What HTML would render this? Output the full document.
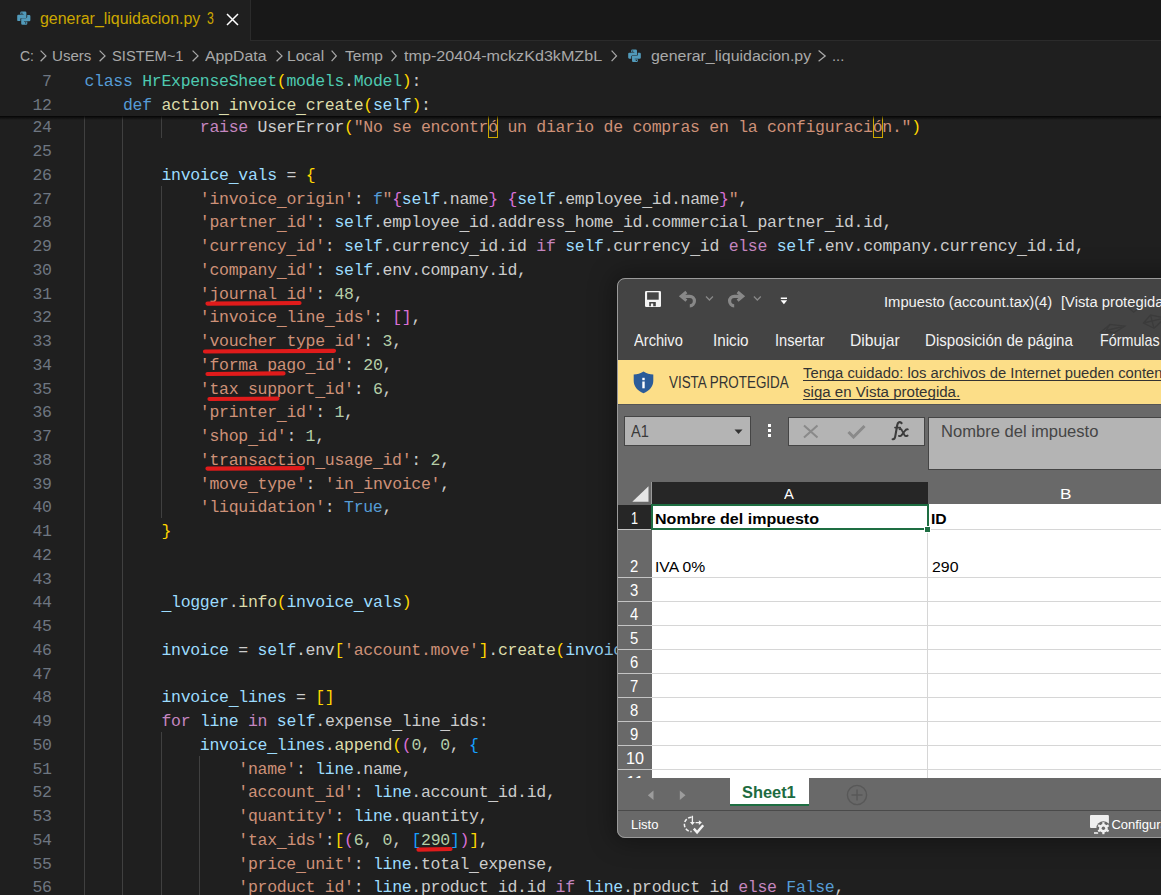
<!DOCTYPE html><html><head><meta charset="utf-8"><style>
*{margin:0;padding:0;box-sizing:border-box}
html,body{width:1161px;height:895px;overflow:hidden;background:#1f1f1f}
body{position:relative;font-family:"Liberation Sans", sans-serif}
.a{position:absolute}
.t{position:absolute;white-space:pre;line-height:1;transform-origin:0 0;font-family:"Liberation Sans", sans-serif}
.ln{position:absolute;left:0;width:51.7px;text-align:right;font-family:"Liberation Mono", monospace;font-size:16.5px;letter-spacing:-0.290px;line-height:23.75px;height:23.75px;color:#6e7681;white-space:pre}
.cl{position:absolute;left:84.5px;font-family:"Liberation Mono", monospace;font-size:16.5px;letter-spacing:-0.290px;line-height:23.75px;height:23.75px;white-space:pre;color:#cccccc}
.ig{position:absolute;width:1px;background:#404040}
.us{position:relative;top:2.6px}
.ub{position:absolute;border:1px solid #cca700;width:10px}
</style></head><body>
<div class="ig" style="left:84px;top:114.50px;height:23.75px"></div>
<div class="ig" style="left:122px;top:114.50px;height:23.75px"></div>
<div class="ig" style="left:161px;top:114.50px;height:23.75px"></div>
<div class="ln" style="top:116.30px">24</div><div class="cl" style="top:116.30px"><span style="color:#cccccc">            </span><span style="color:#c586c0">raise</span><span style="color:#cccccc"> </span><span style="color:#cccccc">UserError</span><span style="color:#ffd700">(</span><span style="color:#ce9178">&quot;No se encontró un diario de compras en la configuración.&quot;</span><span style="color:#ffd700">)</span></div>
<div class="ig" style="left:84px;top:138.25px;height:23.75px"></div>
<div class="ig" style="left:122px;top:138.25px;height:23.75px"></div>
<div class="ln" style="top:140.05px">25</div><div class="cl" style="top:140.05px"></div>
<div class="ig" style="left:84px;top:162.00px;height:23.75px"></div>
<div class="ig" style="left:122px;top:162.00px;height:23.75px"></div>
<div class="ln" style="top:163.80px">26</div><div class="cl" style="top:163.80px"><span style="color:#cccccc">        </span><span style="color:#9cdcfe">invoice<span class="us">_</span>vals</span><span style="color:#cccccc"> = </span><span style="color:#ffd700">{</span></div>
<div class="ig" style="left:84px;top:185.75px;height:23.75px"></div>
<div class="ig" style="left:122px;top:185.75px;height:23.75px"></div>
<div class="ig" style="left:161px;top:185.75px;height:23.75px"></div>
<div class="ln" style="top:187.55px">27</div><div class="cl" style="top:187.55px"><span style="color:#cccccc">            </span><span style="color:#ce9178">&#x27;invoice<span class="us">_</span>origin&#x27;</span><span style="color:#cccccc">: </span><span style="color:#569cd6">f</span><span style="color:#ce9178">&quot;</span><span style="color:#da70d6">{</span><span style="color:#9cdcfe">self</span><span style="color:#cccccc">.name</span><span style="color:#da70d6">}</span><span style="color:#ce9178"> </span><span style="color:#da70d6">{</span><span style="color:#9cdcfe">self</span><span style="color:#cccccc">.employee<span class="us">_</span>id.name</span><span style="color:#da70d6">}</span><span style="color:#ce9178">&quot;</span><span style="color:#cccccc">,</span></div>
<div class="ig" style="left:84px;top:209.50px;height:23.75px"></div>
<div class="ig" style="left:122px;top:209.50px;height:23.75px"></div>
<div class="ig" style="left:161px;top:209.50px;height:23.75px"></div>
<div class="ln" style="top:211.30px">28</div><div class="cl" style="top:211.30px"><span style="color:#cccccc">            </span><span style="color:#ce9178">&#x27;partner<span class="us">_</span>id&#x27;</span><span style="color:#cccccc">: </span><span style="color:#9cdcfe">self</span><span style="color:#cccccc">.employee<span class="us">_</span>id.address<span class="us">_</span>home<span class="us">_</span>id.commercial<span class="us">_</span>partner<span class="us">_</span>id.id,</span></div>
<div class="ig" style="left:84px;top:233.25px;height:23.75px"></div>
<div class="ig" style="left:122px;top:233.25px;height:23.75px"></div>
<div class="ig" style="left:161px;top:233.25px;height:23.75px"></div>
<div class="ln" style="top:235.05px">29</div><div class="cl" style="top:235.05px"><span style="color:#cccccc">            </span><span style="color:#ce9178">&#x27;currency<span class="us">_</span>id&#x27;</span><span style="color:#cccccc">: </span><span style="color:#9cdcfe">self</span><span style="color:#cccccc">.currency<span class="us">_</span>id.id </span><span style="color:#c586c0">if</span><span style="color:#cccccc"> </span><span style="color:#9cdcfe">self</span><span style="color:#cccccc">.currency<span class="us">_</span>id </span><span style="color:#c586c0">else</span><span style="color:#cccccc"> </span><span style="color:#9cdcfe">self</span><span style="color:#cccccc">.env.company.currency<span class="us">_</span>id.id,</span></div>
<div class="ig" style="left:84px;top:257.00px;height:23.75px"></div>
<div class="ig" style="left:122px;top:257.00px;height:23.75px"></div>
<div class="ig" style="left:161px;top:257.00px;height:23.75px"></div>
<div class="ln" style="top:258.80px">30</div><div class="cl" style="top:258.80px"><span style="color:#cccccc">            </span><span style="color:#ce9178">&#x27;company<span class="us">_</span>id&#x27;</span><span style="color:#cccccc">: </span><span style="color:#9cdcfe">self</span><span style="color:#cccccc">.env.company.id,</span></div>
<div class="ig" style="left:84px;top:280.75px;height:23.75px"></div>
<div class="ig" style="left:122px;top:280.75px;height:23.75px"></div>
<div class="ig" style="left:161px;top:280.75px;height:23.75px"></div>
<div class="ln" style="top:282.55px">31</div><div class="cl" style="top:282.55px"><span style="color:#cccccc">            </span><span style="color:#ce9178">&#x27;journal<span class="us">_</span>id&#x27;</span><span style="color:#cccccc">: </span><span style="color:#b5cea8">48</span><span style="color:#cccccc">,</span></div>
<div class="ig" style="left:84px;top:304.50px;height:23.75px"></div>
<div class="ig" style="left:122px;top:304.50px;height:23.75px"></div>
<div class="ig" style="left:161px;top:304.50px;height:23.75px"></div>
<div class="ln" style="top:306.30px">32</div><div class="cl" style="top:306.30px"><span style="color:#cccccc">            </span><span style="color:#ce9178">&#x27;invoice<span class="us">_</span>line<span class="us">_</span>ids&#x27;</span><span style="color:#cccccc">: </span><span style="color:#da70d6">[]</span><span style="color:#cccccc">,</span></div>
<div class="ig" style="left:84px;top:328.25px;height:23.75px"></div>
<div class="ig" style="left:122px;top:328.25px;height:23.75px"></div>
<div class="ig" style="left:161px;top:328.25px;height:23.75px"></div>
<div class="ln" style="top:330.05px">33</div><div class="cl" style="top:330.05px"><span style="color:#cccccc">            </span><span style="color:#ce9178">&#x27;voucher<span class="us">_</span>type<span class="us">_</span>id&#x27;</span><span style="color:#cccccc">: </span><span style="color:#b5cea8">3</span><span style="color:#cccccc">,</span></div>
<div class="ig" style="left:84px;top:352.00px;height:23.75px"></div>
<div class="ig" style="left:122px;top:352.00px;height:23.75px"></div>
<div class="ig" style="left:161px;top:352.00px;height:23.75px"></div>
<div class="ln" style="top:353.80px">34</div><div class="cl" style="top:353.80px"><span style="color:#cccccc">            </span><span style="color:#ce9178">&#x27;forma<span class="us">_</span>pago<span class="us">_</span>id&#x27;</span><span style="color:#cccccc">: </span><span style="color:#b5cea8">20</span><span style="color:#cccccc">,</span></div>
<div class="ig" style="left:84px;top:375.75px;height:23.75px"></div>
<div class="ig" style="left:122px;top:375.75px;height:23.75px"></div>
<div class="ig" style="left:161px;top:375.75px;height:23.75px"></div>
<div class="ln" style="top:377.55px">35</div><div class="cl" style="top:377.55px"><span style="color:#cccccc">            </span><span style="color:#ce9178">&#x27;tax<span class="us">_</span>support<span class="us">_</span>id&#x27;</span><span style="color:#cccccc">: </span><span style="color:#b5cea8">6</span><span style="color:#cccccc">,</span></div>
<div class="ig" style="left:84px;top:399.50px;height:23.75px"></div>
<div class="ig" style="left:122px;top:399.50px;height:23.75px"></div>
<div class="ig" style="left:161px;top:399.50px;height:23.75px"></div>
<div class="ln" style="top:401.30px">36</div><div class="cl" style="top:401.30px"><span style="color:#cccccc">            </span><span style="color:#ce9178">&#x27;printer<span class="us">_</span>id&#x27;</span><span style="color:#cccccc">: </span><span style="color:#b5cea8">1</span><span style="color:#cccccc">,</span></div>
<div class="ig" style="left:84px;top:423.25px;height:23.75px"></div>
<div class="ig" style="left:122px;top:423.25px;height:23.75px"></div>
<div class="ig" style="left:161px;top:423.25px;height:23.75px"></div>
<div class="ln" style="top:425.05px">37</div><div class="cl" style="top:425.05px"><span style="color:#cccccc">            </span><span style="color:#ce9178">&#x27;shop<span class="us">_</span>id&#x27;</span><span style="color:#cccccc">: </span><span style="color:#b5cea8">1</span><span style="color:#cccccc">,</span></div>
<div class="ig" style="left:84px;top:447.00px;height:23.75px"></div>
<div class="ig" style="left:122px;top:447.00px;height:23.75px"></div>
<div class="ig" style="left:161px;top:447.00px;height:23.75px"></div>
<div class="ln" style="top:448.80px">38</div><div class="cl" style="top:448.80px"><span style="color:#cccccc">            </span><span style="color:#ce9178">&#x27;transaction<span class="us">_</span>usage<span class="us">_</span>id&#x27;</span><span style="color:#cccccc">: </span><span style="color:#b5cea8">2</span><span style="color:#cccccc">,</span></div>
<div class="ig" style="left:84px;top:470.75px;height:23.75px"></div>
<div class="ig" style="left:122px;top:470.75px;height:23.75px"></div>
<div class="ig" style="left:161px;top:470.75px;height:23.75px"></div>
<div class="ln" style="top:472.55px">39</div><div class="cl" style="top:472.55px"><span style="color:#cccccc">            </span><span style="color:#ce9178">&#x27;move<span class="us">_</span>type&#x27;</span><span style="color:#cccccc">: </span><span style="color:#ce9178">&#x27;in<span class="us">_</span>invoice&#x27;</span><span style="color:#cccccc">,</span></div>
<div class="ig" style="left:84px;top:494.50px;height:23.75px"></div>
<div class="ig" style="left:122px;top:494.50px;height:23.75px"></div>
<div class="ig" style="left:161px;top:494.50px;height:23.75px"></div>
<div class="ln" style="top:496.30px">40</div><div class="cl" style="top:496.30px"><span style="color:#cccccc">            </span><span style="color:#ce9178">&#x27;liquidation&#x27;</span><span style="color:#cccccc">: </span><span style="color:#569cd6">True</span><span style="color:#cccccc">,</span></div>
<div class="ig" style="left:84px;top:518.25px;height:23.75px"></div>
<div class="ig" style="left:122px;top:518.25px;height:23.75px"></div>
<div class="ln" style="top:520.05px">41</div><div class="cl" style="top:520.05px"><span style="color:#cccccc">        </span><span style="color:#ffd700">}</span></div>
<div class="ig" style="left:84px;top:542.00px;height:23.75px"></div>
<div class="ig" style="left:122px;top:542.00px;height:23.75px"></div>
<div class="ln" style="top:543.80px">42</div><div class="cl" style="top:543.80px"></div>
<div class="ig" style="left:84px;top:565.75px;height:23.75px"></div>
<div class="ig" style="left:122px;top:565.75px;height:23.75px"></div>
<div class="ln" style="top:567.55px">43</div><div class="cl" style="top:567.55px"></div>
<div class="ig" style="left:84px;top:589.50px;height:23.75px"></div>
<div class="ig" style="left:122px;top:589.50px;height:23.75px"></div>
<div class="ln" style="top:591.30px">44</div><div class="cl" style="top:591.30px"><span style="color:#cccccc">        </span><span style="color:#9cdcfe"><span class="us">_</span>logger</span><span style="color:#cccccc">.</span><span style="color:#dcdcaa">info</span><span style="color:#ffd700">(</span><span style="color:#9cdcfe">invoice<span class="us">_</span>vals</span><span style="color:#ffd700">)</span></div>
<div class="ig" style="left:84px;top:613.25px;height:23.75px"></div>
<div class="ig" style="left:122px;top:613.25px;height:23.75px"></div>
<div class="ln" style="top:615.05px">45</div><div class="cl" style="top:615.05px"></div>
<div class="ig" style="left:84px;top:637.00px;height:23.75px"></div>
<div class="ig" style="left:122px;top:637.00px;height:23.75px"></div>
<div class="ln" style="top:638.80px">46</div><div class="cl" style="top:638.80px"><span style="color:#cccccc">        </span><span style="color:#9cdcfe">invoice</span><span style="color:#cccccc"> = </span><span style="color:#9cdcfe">self</span><span style="color:#cccccc">.env</span><span style="color:#ffd700">[</span><span style="color:#ce9178">&#x27;account.move&#x27;</span><span style="color:#ffd700">]</span><span style="color:#cccccc">.</span><span style="color:#dcdcaa">create</span><span style="color:#ffd700">(</span><span style="color:#9cdcfe">invoice<span class="us">_</span>vals</span><span style="color:#ffd700">)</span></div>
<div class="ig" style="left:84px;top:660.75px;height:23.75px"></div>
<div class="ig" style="left:122px;top:660.75px;height:23.75px"></div>
<div class="ln" style="top:662.55px">47</div><div class="cl" style="top:662.55px"></div>
<div class="ig" style="left:84px;top:684.50px;height:23.75px"></div>
<div class="ig" style="left:122px;top:684.50px;height:23.75px"></div>
<div class="ln" style="top:686.30px">48</div><div class="cl" style="top:686.30px"><span style="color:#cccccc">        </span><span style="color:#9cdcfe">invoice<span class="us">_</span>lines</span><span style="color:#cccccc"> = </span><span style="color:#ffd700">[]</span></div>
<div class="ig" style="left:84px;top:708.25px;height:23.75px"></div>
<div class="ig" style="left:122px;top:708.25px;height:23.75px"></div>
<div class="ln" style="top:710.05px">49</div><div class="cl" style="top:710.05px"><span style="color:#cccccc">        </span><span style="color:#c586c0">for</span><span style="color:#cccccc"> </span><span style="color:#9cdcfe">line</span><span style="color:#cccccc"> </span><span style="color:#c586c0">in</span><span style="color:#cccccc"> </span><span style="color:#9cdcfe">self</span><span style="color:#cccccc">.expense<span class="us">_</span>line<span class="us">_</span>ids:</span></div>
<div class="ig" style="left:84px;top:732.00px;height:23.75px"></div>
<div class="ig" style="left:122px;top:732.00px;height:23.75px"></div>
<div class="ig" style="left:161px;top:732.00px;height:23.75px"></div>
<div class="ln" style="top:733.80px">50</div><div class="cl" style="top:733.80px"><span style="color:#cccccc">            </span><span style="color:#9cdcfe">invoice<span class="us">_</span>lines</span><span style="color:#cccccc">.</span><span style="color:#dcdcaa">append</span><span style="color:#ffd700">(</span><span style="color:#da70d6">(</span><span style="color:#b5cea8">0</span><span style="color:#cccccc">, </span><span style="color:#b5cea8">0</span><span style="color:#cccccc">, </span><span style="color:#179fff">{</span></div>
<div class="ig" style="left:84px;top:755.75px;height:23.75px"></div>
<div class="ig" style="left:122px;top:755.75px;height:23.75px"></div>
<div class="ig" style="left:161px;top:755.75px;height:23.75px"></div>
<div class="ig" style="left:199px;top:755.75px;height:23.75px"></div>
<div class="ln" style="top:757.55px">51</div><div class="cl" style="top:757.55px"><span style="color:#cccccc">                </span><span style="color:#ce9178">&#x27;name&#x27;</span><span style="color:#cccccc">: </span><span style="color:#9cdcfe">line</span><span style="color:#cccccc">.name,</span></div>
<div class="ig" style="left:84px;top:779.50px;height:23.75px"></div>
<div class="ig" style="left:122px;top:779.50px;height:23.75px"></div>
<div class="ig" style="left:161px;top:779.50px;height:23.75px"></div>
<div class="ig" style="left:199px;top:779.50px;height:23.75px"></div>
<div class="ln" style="top:781.30px">52</div><div class="cl" style="top:781.30px"><span style="color:#cccccc">                </span><span style="color:#ce9178">&#x27;account<span class="us">_</span>id&#x27;</span><span style="color:#cccccc">: </span><span style="color:#9cdcfe">line</span><span style="color:#cccccc">.account<span class="us">_</span>id.id,</span></div>
<div class="ig" style="left:84px;top:803.25px;height:23.75px"></div>
<div class="ig" style="left:122px;top:803.25px;height:23.75px"></div>
<div class="ig" style="left:161px;top:803.25px;height:23.75px"></div>
<div class="ig" style="left:199px;top:803.25px;height:23.75px"></div>
<div class="ln" style="top:805.05px">53</div><div class="cl" style="top:805.05px"><span style="color:#cccccc">                </span><span style="color:#ce9178">&#x27;quantity&#x27;</span><span style="color:#cccccc">: </span><span style="color:#9cdcfe">line</span><span style="color:#cccccc">.quantity,</span></div>
<div class="ig" style="left:84px;top:827.00px;height:23.75px"></div>
<div class="ig" style="left:122px;top:827.00px;height:23.75px"></div>
<div class="ig" style="left:161px;top:827.00px;height:23.75px"></div>
<div class="ig" style="left:199px;top:827.00px;height:23.75px"></div>
<div class="ln" style="top:828.80px">54</div><div class="cl" style="top:828.80px"><span style="color:#cccccc">                </span><span style="color:#ce9178">&#x27;tax<span class="us">_</span>ids&#x27;</span><span style="color:#cccccc">:</span><span style="color:#ffd700">[</span><span style="color:#da70d6">(</span><span style="color:#b5cea8">6</span><span style="color:#cccccc">, </span><span style="color:#b5cea8">0</span><span style="color:#cccccc">, </span><span style="color:#179fff">[</span><span style="color:#b5cea8">290</span><span style="color:#179fff">]</span><span style="color:#da70d6">)</span><span style="color:#ffd700">]</span><span style="color:#cccccc">,</span></div>
<div class="ig" style="left:84px;top:850.75px;height:23.75px"></div>
<div class="ig" style="left:122px;top:850.75px;height:23.75px"></div>
<div class="ig" style="left:161px;top:850.75px;height:23.75px"></div>
<div class="ig" style="left:199px;top:850.75px;height:23.75px"></div>
<div class="ln" style="top:852.55px">55</div><div class="cl" style="top:852.55px"><span style="color:#cccccc">                </span><span style="color:#ce9178">&#x27;price<span class="us">_</span>unit&#x27;</span><span style="color:#cccccc">: </span><span style="color:#9cdcfe">line</span><span style="color:#cccccc">.total<span class="us">_</span>expense,</span></div>
<div class="ig" style="left:84px;top:874.50px;height:23.75px"></div>
<div class="ig" style="left:122px;top:874.50px;height:23.75px"></div>
<div class="ig" style="left:161px;top:874.50px;height:23.75px"></div>
<div class="ig" style="left:199px;top:874.50px;height:23.75px"></div>
<div class="ln" style="top:876.30px">56</div><div class="cl" style="top:876.30px"><span style="color:#cccccc">                </span><span style="color:#ce9178">&#x27;product<span class="us">_</span>id&#x27;</span><span style="color:#cccccc">: </span><span style="color:#9cdcfe">line</span><span style="color:#cccccc">.product<span class="us">_</span>id.id </span><span style="color:#c586c0">if</span><span style="color:#cccccc"> </span><span style="color:#9cdcfe">line</span><span style="color:#cccccc">.product<span class="us">_</span>id </span><span style="color:#c586c0">else</span><span style="color:#cccccc"> </span><span style="color:#569cd6">False</span><span style="color:#cccccc">,</span></div>
<div class="ub" style="left:488.1px;top:114.5px;height:23.9px"></div>
<div class="ub" style="left:872.5px;top:114.5px;height:23.9px"></div>
<div class="a" style="left:0;top:41px;width:1161px;height:75px;background:#1f1f1f"></div>
<div class="a" style="left:0;top:116px;width:1161px;height:4px;background:linear-gradient(rgba(0,0,0,0.85),rgba(0,0,0,0))"></div>
<div class="ln" style="top:70.30px">7</div><div class="cl" style="top:70.30px"><span style="color:#569cd6">class</span><span style="color:#cccccc"> </span><span style="color:#4ec9b0">HrExpenseSheet</span><span style="color:#ffd700">(</span><span style="color:#4ec9b0">models</span><span style="color:#cccccc">.</span><span style="color:#4ec9b0">Model</span><span style="color:#ffd700">)</span><span style="color:#cccccc">:</span></div>
<div class="ln" style="top:94.05px">12</div><div class="cl" style="top:94.05px"><span style="color:#cccccc">    </span><span style="color:#569cd6">def</span><span style="color:#cccccc"> </span><span style="color:#dcdcaa">action<span class="us">_</span>invoice<span class="us">_</span>create</span><span style="color:#ffd700">(</span><span style="color:#9cdcfe">self</span><span style="color:#ffd700">)</span><span style="color:#cccccc">:</span></div>
<div class="a" style="left:0;top:0;width:1161px;height:40px;background:#181818"></div>
<div class="a" style="left:0;top:0;width:250px;height:41px;background:#1f1f1f"></div>
<div class="a" style="left:250px;top:0;width:1px;height:41px;background:#2b2b2b"></div>
<div class="a" style="left:250px;top:40px;width:911px;height:1px;background:#2b2b2b"></div>
<svg class="a" style="left:16.7px;top:10.9px" width="14" height="14" viewBox="0 0 14 14"><path fill="#519aba" d="M3.3 1.7Q3.3 0.45 4.6 0.45H8.1Q9.4 0.45 9.4 1.7V6.9H4.5Q3.4 6.9 3.4 8V10.1H1.4Q0.2 10.1 0.2 8.9V5Q0.2 3.8 1.4 3.8H6.6V3.3H3.3Z"/><path fill="#519aba" transform="rotate(180 6.8 7.05)" d="M3.3 1.7Q3.3 0.45 4.6 0.45H8.1Q9.4 0.45 9.4 1.7V6.9H4.5Q3.4 6.9 3.4 8V10.1H1.4Q0.2 10.1 0.2 8.9V5Q0.2 3.8 1.4 3.8H6.6V3.3H3.3Z"/><circle cx="4.9" cy="2.2" r="0.65" fill="#1f1f1f"/><circle cx="8.7" cy="11.9" r="0.65" fill="#1f1f1f"/></svg>
<svg class="a" style="left:226px;top:13px" width="13" height="13"><path d="M1 1L12 12M12 1L1 12" stroke="#ffffff" stroke-width="1.5"/></svg>
<svg class="a" style="left:38.7px;top:48.5px" width="8.5" height="13.8"><path d="M1.6 1.6L6.9 6.9L1.6 12.2" fill="none" stroke="#a9a9a9" stroke-width="1.25"/></svg>
<svg class="a" style="left:98.0px;top:48.5px" width="8.6" height="13.8"><path d="M1.6 1.6L7.0 6.9L1.6 12.2" fill="none" stroke="#a9a9a9" stroke-width="1.25"/></svg>
<svg class="a" style="left:191.0px;top:48.5px" width="8.6" height="13.8"><path d="M1.6 1.6L7.0 6.9L1.6 12.2" fill="none" stroke="#a9a9a9" stroke-width="1.25"/></svg>
<svg class="a" style="left:275.0px;top:48.5px" width="8.6" height="13.8"><path d="M1.6 1.6L7.0 6.9L1.6 12.2" fill="none" stroke="#a9a9a9" stroke-width="1.25"/></svg>
<svg class="a" style="left:330.2px;top:48.5px" width="7.9" height="13.8"><path d="M1.6 1.6L6.3 6.9L1.6 12.2" fill="none" stroke="#a9a9a9" stroke-width="1.25"/></svg>
<svg class="a" style="left:390.3px;top:48.5px" width="7.8" height="13.8"><path d="M1.6 1.6L6.2 6.9L1.6 12.2" fill="none" stroke="#a9a9a9" stroke-width="1.25"/></svg>
<svg class="a" style="left:609.7px;top:48.5px" width="8.1" height="13.8"><path d="M1.6 1.6L6.5 6.9L1.6 12.2" fill="none" stroke="#a9a9a9" stroke-width="1.25"/></svg>
<svg class="a" style="left:817.4px;top:48.5px" width="9.8" height="13.8"><path d="M1.6 1.6L8.2 6.9L1.6 12.2" fill="none" stroke="#a9a9a9" stroke-width="1.25"/></svg>
<svg class="a" style="left:628px;top:48.8px" width="13.4" height="13.4" viewBox="0 0 14 14"><path fill="#519aba" d="M3.3 1.7Q3.3 0.45 4.6 0.45H8.1Q9.4 0.45 9.4 1.7V6.9H4.5Q3.4 6.9 3.4 8V10.1H1.4Q0.2 10.1 0.2 8.9V5Q0.2 3.8 1.4 3.8H6.6V3.3H3.3Z"/><path fill="#519aba" transform="rotate(180 6.8 7.05)" d="M3.3 1.7Q3.3 0.45 4.6 0.45H8.1Q9.4 0.45 9.4 1.7V6.9H4.5Q3.4 6.9 3.4 8V10.1H1.4Q0.2 10.1 0.2 8.9V5Q0.2 3.8 1.4 3.8H6.6V3.3H3.3Z"/><circle cx="4.9" cy="2.2" r="0.65" fill="#1f1f1f"/><circle cx="8.7" cy="11.9" r="0.65" fill="#1f1f1f"/></svg>
<svg class="a" style="left:0;top:0" width="1161" height="895"><path d="M207.5 303.6L299.5 303.0" stroke="#e01b1b" stroke-width="4.2" stroke-linecap="round" fill="none"/></svg>
<svg class="a" style="left:0;top:0" width="1161" height="895"><path d="M205 351.5L334 350.8" stroke="#e01b1b" stroke-width="4.2" stroke-linecap="round" fill="none"/></svg>
<svg class="a" style="left:0;top:0" width="1161" height="895"><path d="M207.5 374.0L283.5 373.4" stroke="#e01b1b" stroke-width="4.2" stroke-linecap="round" fill="none"/></svg>
<svg class="a" style="left:0;top:0" width="1161" height="895"><path d="M209.5 399.0L277.5 398.6" stroke="#e01b1b" stroke-width="4.2" stroke-linecap="round" fill="none"/></svg>
<svg class="a" style="left:0;top:0" width="1161" height="895"><path d="M207.5 468.6L303 468.2" stroke="#e01b1b" stroke-width="4.2" stroke-linecap="round" fill="none"/></svg>
<svg class="a" style="left:0;top:0" width="1161" height="895"><path d="M418.5 849.6L450.5 849.0" stroke="#e01b1b" stroke-width="4.2" stroke-linecap="round" fill="none"/></svg>
<div class="a" style="left:617px;top:278px;width:600px;height:560px;border-radius:8px;box-shadow:0 0 24px 4px rgba(0,0,0,0.35)"></div>
<div class="a" style="left:617px;top:278px;width:600px;height:559.5px;border-radius:8px;overflow:hidden;background:#444444">
<div class="a" style="left:-617px;top:-278px;width:1161px;height:895px">
<div class="a" style="left:617.00px;top:359.50px;width:544.00px;height:44.10px;background:#fcde88;"></div>
<div class="a" style="left:617.00px;top:403.60px;width:544.00px;height:0.90px;background:#555555;"></div>
<div class="a" style="left:617.00px;top:404.50px;width:544.00px;height:435.50px;background:#696969;"></div>
<div class="a" style="left:624.00px;top:416.00px;width:127.00px;height:30.00px;background:#b4b4b4;border:1px solid #454545"></div>
<svg class="a" style="left:734px;top:428.5px" width="9" height="6"><path d="M0.5 0.5H8.5L4.5 5Z" fill="#333"/></svg>
<div class="a" style="left:768.00px;top:424.00px;width:3.20px;height:3.20px;background:#ffffff;"></div>
<div class="a" style="left:768.00px;top:429.00px;width:3.20px;height:3.20px;background:#ffffff;"></div>
<div class="a" style="left:768.00px;top:434.00px;width:3.20px;height:3.20px;background:#ffffff;"></div>
<div class="a" style="left:788.00px;top:416.50px;width:137.00px;height:29.00px;background:#b4b4b4;border:1px solid #454545"></div>
<svg class="a" style="left:802px;top:423.5px" width="17" height="15"><path d="M2 1.5L15.5 13.5M15.5 1.5L2 13.5" stroke="#8a8a8a" stroke-width="2.1"/></svg>
<svg class="a" style="left:847px;top:424px" width="19" height="15"><path d="M1.5 8L6.5 13L17.5 2" stroke="#8a8a8a" stroke-width="3" fill="none"/></svg>
<svg class="a" style="left:880px;top:415px" width="40" height="30"><g transform="translate(-880 -415)" fill="none" stroke="#3c3c3c" stroke-linecap="round"><path d="M901.6 423.2Q900.6 421.7 899 422.3Q897.6 422.9 897.2 425.2L895.2 436.6Q894.6 439.6 892.6 439.2" stroke-width="2.1"/><path d="M894.9 427.6H900.3" stroke-width="1.6"/><path d="M899.6 429.2Q901.2 428.6 902.1 430.6L904.6 435.2Q905.5 436.7 907.6 435.6M907.8 429.4Q906.2 428.9 904.6 431.3L901.6 435.2Q900.5 436.6 898.9 435.9" stroke-width="1.9"/></g></svg>
<div class="a" style="left:928.00px;top:416.50px;width:272.00px;height:53.00px;background:#b4b4b4;border:1px solid #454545"></div>
<div class="a" style="left:651.50px;top:482.00px;width:276.00px;height:22.40px;background:#262626;"></div>
<div class="a" style="left:651.00px;top:482.00px;width:1.00px;height:22.40px;background:#9a9a9a;"></div>
<svg class="a" style="left:632px;top:486px" width="17" height="16"><path d="M16.5 0.3V15.8H0.3Z" fill="#e6e6e6"/></svg>
<div class="a" style="left:651.50px;top:504.40px;width:509.50px;height:273.60px;background:#ffffff;"></div>
<div class="a" style="left:617.00px;top:505.20px;width:34.50px;height:24.00px;background:#262626;"></div>
<div class="a" style="left:617.00px;top:529.00px;width:34.00px;height:1.00px;background:#c4c4c4;"></div>
<div class="a" style="left:651.00px;top:529.00px;width:510.00px;height:1.00px;background:#d6d6d6;"></div>
<div class="a" style="left:617.00px;top:577.00px;width:34.00px;height:1.00px;background:#c4c4c4;"></div>
<div class="a" style="left:651.00px;top:577.00px;width:510.00px;height:1.00px;background:#d6d6d6;"></div>
<div class="a" style="left:617.00px;top:601.00px;width:34.00px;height:1.00px;background:#c4c4c4;"></div>
<div class="a" style="left:651.00px;top:601.00px;width:510.00px;height:1.00px;background:#d6d6d6;"></div>
<div class="a" style="left:617.00px;top:625.00px;width:34.00px;height:1.00px;background:#c4c4c4;"></div>
<div class="a" style="left:651.00px;top:625.00px;width:510.00px;height:1.00px;background:#d6d6d6;"></div>
<div class="a" style="left:617.00px;top:649.00px;width:34.00px;height:1.00px;background:#c4c4c4;"></div>
<div class="a" style="left:651.00px;top:649.00px;width:510.00px;height:1.00px;background:#d6d6d6;"></div>
<div class="a" style="left:617.00px;top:673.00px;width:34.00px;height:1.00px;background:#c4c4c4;"></div>
<div class="a" style="left:651.00px;top:673.00px;width:510.00px;height:1.00px;background:#d6d6d6;"></div>
<div class="a" style="left:617.00px;top:697.00px;width:34.00px;height:1.00px;background:#c4c4c4;"></div>
<div class="a" style="left:651.00px;top:697.00px;width:510.00px;height:1.00px;background:#d6d6d6;"></div>
<div class="a" style="left:617.00px;top:721.00px;width:34.00px;height:1.00px;background:#c4c4c4;"></div>
<div class="a" style="left:651.00px;top:721.00px;width:510.00px;height:1.00px;background:#d6d6d6;"></div>
<div class="a" style="left:617.00px;top:745.00px;width:34.00px;height:1.00px;background:#c4c4c4;"></div>
<div class="a" style="left:651.00px;top:745.00px;width:510.00px;height:1.00px;background:#d6d6d6;"></div>
<div class="a" style="left:617.00px;top:769.00px;width:34.00px;height:1.00px;background:#c4c4c4;"></div>
<div class="a" style="left:651.00px;top:769.00px;width:510.00px;height:1.00px;background:#d6d6d6;"></div>
<div class="a" style="left:927.00px;top:504.40px;width:1.00px;height:273.60px;background:#d6d6d6;"></div>
<div class="a" style="left:650.50px;top:504.40px;width:278.10px;height:25.80px;background:transparent;border:2px solid #1e6e42"></div>
<div class="a" style="left:924.60px;top:526.60px;width:5.60px;height:5.60px;background:#1e6e42;outline:1px solid #ffffff"></div>
<div class="a" style="left:617.00px;top:778.00px;width:544.00px;height:32.00px;background:#696969;"></div>
<div class="a" style="left:730.00px;top:778.00px;width:78.50px;height:28.40px;background:#ffffff;"></div>
<div class="a" style="left:730.00px;top:803.60px;width:78.50px;height:2.80px;background:#1e6e42;"></div>
<svg class="a" style="left:647px;top:789.5px" width="8" height="11"><path d="M6.5 0.5V10L0.8 5.3Z" fill="#9c9c9c"/></svg>
<svg class="a" style="left:679px;top:789.5px" width="8" height="11"><path d="M0.8 0.5V10L6.5 5.3Z" fill="#9c9c9c"/></svg>
<svg class="a" style="left:846px;top:784px" width="22" height="22"><circle cx="11" cy="11" r="9.6" stroke="#585858" stroke-width="1.4" fill="none"/><path d="M11 5.5V16.5M5.5 11H16.5" stroke="#585858" stroke-width="1.4"/></svg>
<div class="a" style="left:617.00px;top:809.60px;width:544.00px;height:1.20px;background:#4a4a4a;"></div>
<svg class="a" style="left:683px;top:814px" width="23" height="21"><path d="M8.6 3.2A7.2 7.2 0 0 0 8.6 17.6" stroke="#f2f2f2" stroke-width="1.5" fill="none" stroke-dasharray="3.6 1.7"/><path d="M9.4 1.8V9" stroke="#f2f2f2" stroke-width="1.3"/><path d="M6.9 8.1H11.9L9.4 11Z" fill="#f2f2f2"/><path d="M12.6 8.6H16.5" stroke="#f2f2f2" stroke-width="1.3"/><path d="M15.9 6.2L18.9 8.6L15.9 11Z" fill="#f2f2f2"/><path d="M10.8 14.6L14.1 18.4L20.2 11.2" stroke="#f2f2f2" stroke-width="2.4" fill="none"/></svg>
<svg class="a" style="left:1089px;top:814px" width="22" height="22"><rect x="1" y="1" width="18.9" height="12.9" rx="1" fill="#efefef"/><path d="M5 19H9.3" stroke="#efefef" stroke-width="1.6"/><circle cx="14.4" cy="14.2" r="7" fill="#696969"/><g transform="translate(14.4 14.2)" fill="#efefef"><circle r="4.3"/><rect x="-1.1" y="-6" width="2.2" height="12"/><rect x="-1.1" y="-6" width="2.2" height="12" transform="rotate(60)"/><rect x="-1.1" y="-6" width="2.2" height="12" transform="rotate(120)"/><circle r="1.7" fill="#696969"/></g></svg>
<svg class="a" style="left:645px;top:291px" width="16" height="16"><rect x="0" y="0" width="16" height="16" rx="1.2" fill="#f4f4f4"/><rect x="2.1" y="1.3" width="11.6" height="7.4" fill="#444"/><path d="M4.2 15.2V11.1H10.8V15.2H8.2V12.5H5.9V15.2Z" fill="#444"/></svg>
<svg class="a" style="left:670px;top:286px" width="100" height="24"><g transform="translate(-670 -286)" fill="#888888" stroke="#888888"><path d="M682 296.3H689.8A4.6 4.75 0 0 1 689.8 305.8" stroke-width="3.2" fill="none"/><path d="M686.4 292L681.2 296.3L686.4 300.6" stroke-width="3" fill="none"/><path d="M742 296.3H734.2A4.6 4.75 0 0 0 734.2 305.8" stroke-width="3.2" fill="none"/><path d="M737.6 292L742.8 296.3L737.6 300.6" stroke-width="3" fill="none"/><path d="M706 296.5L709.45 300L712.9 296.5M753.9 296.5L757.35 300L760.8 296.5" stroke-width="1.3" fill="none"/></g></svg>
<svg class="a" style="left:780px;top:297px" width="8" height="8"><path d="M0.8 1.2H7" stroke="#fff" stroke-width="1.4"/><path d="M0.6 3.3H7.2L3.9 7.2Z" fill="#fff"/></svg>
<svg class="a" style="left:1090px;top:300px" width="71" height="40"><g transform="translate(-1090 -300)" fill="none" stroke="#3b3b3b" stroke-width="1.3"><path d="M1100.9 332.1L1110 324.4L1124.7 326.2L1114.2 332.8Z M1110 324.4L1106 330.5L1114.2 332.8 M1106 330.5L1124.7 326.2"/><path d="M1143.5 323L1150.5 315L1165 318L1154 328.3Z M1150.5 315L1154 328.3 M1143.5 323L1165 318"/><path d="M1127.8 307.2L1133.7 312.2L1139.8 307.2"/></g></svg>
<svg class="a" style="left:632.5px;top:371px" width="21" height="23"><path d="M10.5 0.5C7.5 2.5 4.3 3.3 0.7 3.6V9.8C0.7 15.5 4.5 19.7 10.5 22.2C16.5 19.7 20.3 15.5 20.3 9.8V3.6C16.7 3.3 13.5 2.5 10.5 0.5Z" fill="#2c5c99"/><rect x="9.3" y="10.5" width="2.4" height="6.8" fill="#fff"/><rect x="9.3" y="6.8" width="2.4" height="2.4" fill="#fff"/></svg>
</div></div>
<div class="a" style="left:617px;top:278px;width:600px;height:559.5px;border-radius:8px;border:1px solid #9a9a9a"></div>
<div class="t" style="left:40.00px;top:11.25px;font-size:16px;color:#cca700;font-weight:400;transform:scaleX(0.9957);">generar_liquidacion.py</div>
<div class="t" style="left:207.30px;top:11.25px;font-size:16px;color:#cca700;font-weight:400;transform:scaleX(0.7667);">3</div>
<div class="t" style="left:19.60px;top:47.83px;font-size:15.2px;color:#a9a9a9;font-weight:400;transform:scaleX(0.9164);">C:</div>
<div class="t" style="left:51.61px;top:47.83px;font-size:15.2px;color:#a9a9a9;font-weight:400;transform:scaleX(0.9932);">Users</div>
<div class="t" style="left:112.00px;top:47.83px;font-size:15.2px;color:#a9a9a9;font-weight:400;transform:scaleX(0.9672);">SISTEM~1</div>
<div class="t" style="left:205.00px;top:47.83px;font-size:15.2px;color:#a9a9a9;font-weight:400;transform:scaleX(1.0393);">AppData</div>
<div class="t" style="left:287.18px;top:47.83px;font-size:15.2px;color:#a9a9a9;font-weight:400;transform:scaleX(1.0219);">Local</div>
<div class="t" style="left:345.00px;top:47.83px;font-size:15.2px;color:#a9a9a9;font-weight:400;transform:scaleX(1.0221);">Temp</div>
<div class="t" style="left:404.40px;top:47.83px;font-size:15.2px;color:#a9a9a9;font-weight:400;transform:scaleX(1.0624);">tmp-20404-mckzKd3kMZbL</div>
<div class="t" style="left:651.00px;top:47.83px;font-size:15.2px;color:#a9a9a9;font-weight:400;transform:scaleX(1.0481);">generar_liquidacion.py</div>
<div class="t" style="left:831.93px;top:47.83px;font-size:15.2px;color:#a9a9a9;font-weight:400;transform:scaleX(0.9675);">...</div>
<div class="t" style="left:883.53px;top:293.85px;font-size:15.3px;color:#f2f2f2;font-weight:400;transform:scaleX(0.9654);">Impuesto (account.tax)(4)</div>
<div class="t" style="left:1061.03px;top:293.85px;font-size:15.3px;color:#f2f2f2;font-weight:400;transform:scaleX(0.9654);">[Vista protegida]</div>
<div class="t" style="left:634.20px;top:332.51px;font-size:15.7px;color:#f2f2f2;font-weight:400;transform:scaleX(0.9337);">Archivo</div>
<div class="t" style="left:713.33px;top:332.51px;font-size:15.7px;color:#f2f2f2;font-weight:400;transform:scaleX(0.9722);">Inicio</div>
<div class="t" style="left:775.37px;top:332.51px;font-size:15.7px;color:#f2f2f2;font-weight:400;transform:scaleX(0.9315);">Insertar</div>
<div class="t" style="left:850.30px;top:332.51px;font-size:15.7px;color:#f2f2f2;font-weight:400;transform:scaleX(1.0005);">Dibujar</div>
<div class="t" style="left:925.44px;top:332.51px;font-size:15.7px;color:#f2f2f2;font-weight:400;transform:scaleX(0.9629);">Disposición de página</div>
<div class="t" style="left:1099.79px;top:332.51px;font-size:15.7px;color:#f2f2f2;font-weight:400;transform:scaleX(0.9127);">Fórmulas</div>
<div class="t" style="left:668.60px;top:374.85px;font-size:16px;color:#333333;font-weight:400;transform:scaleX(0.8379);">VISTA PROTEGIDA</div>
<div class="t" style="left:802.80px;top:384.38px;font-size:15.5px;color:#333333;font-weight:400;transform:scaleX(0.9719);text-decoration:underline;text-underline-offset:2px;text-decoration-skip-ink:none;">siga en Vista protegida.</div>
<div class="t" style="left:802.80px;top:364.98px;font-size:15.5px;color:#333333;font-weight:400;transform:scaleX(0.9549);text-decoration:underline;text-underline-offset:2px;text-decoration-skip-ink:none;">Tenga cuidado: los archivos de Internet pueden contener virus.</div>
<div class="t" style="left:631.20px;top:423.55px;font-size:16px;color:#3a3a3a;font-weight:400;transform:scaleX(0.9099);">A1</div>
<div class="t" style="left:941.46px;top:424.05px;font-size:16px;color:#454545;font-weight:400;transform:scaleX(1.0352);">Nombre del impuesto</div>
<div class="t" style="left:784.10px;top:487.92px;font-size:13.8px;color:#ffffff;font-weight:400;transform:scaleX(1.0700);">A</div>
<div class="t" style="left:1059.55px;top:487.92px;font-size:13.8px;color:#ffffff;font-weight:400;transform:scaleX(1.2500);">B</div>
<div class="t" style="left:630.84px;top:509.83px;font-size:16.5px;color:#ffffff;font-weight:400;transform:scaleX(0.7625);">1</div>
<div class="t" style="left:630.40px;top:558.03px;font-size:16.5px;color:#ffffff;font-weight:400;transform:scaleX(0.9000);">2</div>
<div class="t" style="left:630.40px;top:582.23px;font-size:16.5px;color:#ffffff;font-weight:400;transform:scaleX(0.9000);">3</div>
<div class="t" style="left:630.40px;top:606.23px;font-size:16.5px;color:#ffffff;font-weight:400;transform:scaleX(0.9000);">4</div>
<div class="t" style="left:630.40px;top:630.23px;font-size:16.5px;color:#ffffff;font-weight:400;transform:scaleX(0.9000);">5</div>
<div class="t" style="left:630.40px;top:654.23px;font-size:16.5px;color:#ffffff;font-weight:400;transform:scaleX(0.9000);">6</div>
<div class="t" style="left:630.40px;top:678.23px;font-size:16.5px;color:#ffffff;font-weight:400;transform:scaleX(0.9000);">7</div>
<div class="t" style="left:630.40px;top:702.23px;font-size:16.5px;color:#ffffff;font-weight:400;transform:scaleX(0.9000);">8</div>
<div class="t" style="left:630.40px;top:726.23px;font-size:16.5px;color:#ffffff;font-weight:400;transform:scaleX(0.9000);">9</div>
<div class="t" style="left:626.12px;top:750.23px;font-size:16.5px;color:#ffffff;font-weight:400;transform:scaleX(0.9781);">10</div>
<div class="t" style="left:626.05px;top:774.23px;font-size:16.5px;color:#ffffff;font-weight:400;transform:scaleX(1.0532);clip-path:inset(0 0 12.73px 0);">11</div>
<div class="t" style="left:654.74px;top:510.83px;font-size:15.2px;color:#000000;font-weight:700;transform:scaleX(1.0559);">Nombre del impuesto</div>
<div class="t" style="left:930.97px;top:510.83px;font-size:15.2px;color:#000000;font-weight:700;transform:scaleX(1.0338);">ID</div>
<div class="t" style="left:654.87px;top:559.13px;font-size:15.2px;color:#000000;font-weight:400;transform:scaleX(1.0309);">IVA 0%</div>
<div class="t" style="left:931.70px;top:559.13px;font-size:15.2px;color:#000000;font-weight:400;transform:scaleX(1.0445);">290</div>
<div class="t" style="left:742.40px;top:783.51px;font-size:17px;color:#1d6b40;font-weight:700;transform:scaleX(0.9639);">Sheet1</div>
<div class="t" style="left:631.20px;top:817.79px;font-size:13px;color:#ffffff;font-weight:400;transform:scaleX(0.9989);">Listo</div>
<div class="t" style="left:1111.40px;top:817.69px;font-size:13px;color:#ffffff;font-weight:400;transform:scaleX(1.0000);">Configuración de presentación</div>
</body></html>
